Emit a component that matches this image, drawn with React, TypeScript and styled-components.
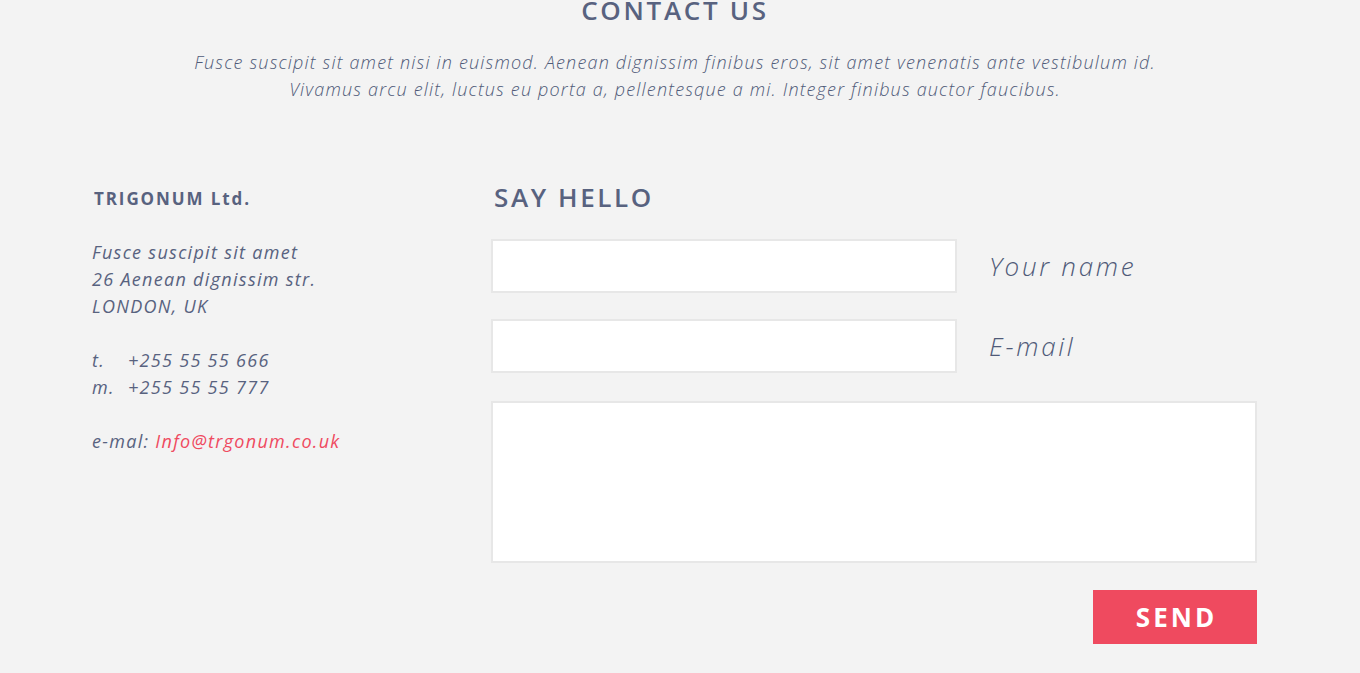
import React from "react";
import styled, { createGlobalStyle } from "styled-components";

const Global = createGlobalStyle`
  html, body { margin: 0; padding: 0; background: #f3f3f3; }
  body { font-family: "Open Sans", "Liberation Sans", sans-serif; color: #58627f; }
  * { box-sizing: border-box; }
`;

const Page = styled.div`
  width: 1166px;
  margin-left: 92px;
  padding-bottom: 40px;
`;

const Title = styled.h2`
  margin: 0;
  font-size: 26px;
  line-height: 20px;
  font-weight: 600;
  letter-spacing: 2.7px;
  text-align: center;
  color: #58627f;
`;

const Lead = styled.p`
  margin: 29px 0 0;
  font-size: 18px;
  line-height: 27px;
  font-style: italic;
  font-weight: 300;
  letter-spacing: 1.18px;
  text-align: center;
  color: #4f5a78;
`;

const Columns = styled.div`
  display: grid;
  grid-template-columns: 399px 766px;
  margin-top: 82px;
`;

const Company = styled.h3`
  margin: 2px 0 0 2px;
  font-size: 17px;
  line-height: 24px;
  font-weight: 700;
  letter-spacing: 1.9px;
  color: #58627f;
`;

const Info = styled.div`
  margin-top: 28px;
  font-size: 18px;
  line-height: 27px;
  font-style: italic;
  font-weight: 400;
  letter-spacing: 1.3px;
  color: #58627f;
`;

const Block = styled.div`
  margin-bottom: 27px;
`;

const Phone = styled.div`
  display: flex;
`;

const PhoneKey = styled.span`
  width: 36px;
`;

const Mail = styled.a`
  color: #ef4a5f;
  text-decoration: none;
`;

const Form = styled.form`
  display: flex;
  flex-direction: column;
`;

const FormTitle = styled.h3`
  margin: -3px 0 0 3px;
  font-size: 26px;
  line-height: 30px;
  font-weight: 600;
  letter-spacing: 2.6px;
  color: #58627f;
`;

const Row = styled.label`
  display: flex;
  align-items: center;
  gap: 32px;
  margin-top: ${(p: { $top: number }) => p.$top}px;
`;

const Input = styled.input`
  width: 466px;
  height: 54px;
  border: 2px solid #e7e7e7;
  background: #fff;
  outline: none;
  font: inherit;
`;

const FieldLabel = styled.span`
  font-size: 26px;
  font-style: italic;
  font-weight: 300;
  letter-spacing: 2.7px;
  color: #4f5a78;
`;

const Message = styled.textarea`
  margin-top: 28px;
  width: 766px;
  height: 162px;
  border: 2px solid #e7e7e7;
  background: #fff;
  outline: none;
  resize: none;
  font: inherit;
`;

const Actions = styled.div`
  display: flex;
  justify-content: flex-end;
  margin-top: 27px;
`;

const Send = styled.button`
  width: 164px;
  height: 54px;
  border: none;
  background: #ef4a5f;
  color: #fff;
  font-family: "Open Sans", "Liberation Sans", sans-serif;
  font-size: 26px;
  font-weight: 700;
  letter-spacing: 3px;
  padding: 0 0 0 3px;
  cursor: pointer;
`;

export default function App() {
  return (
    <>
      <Global />
      <Page>
        <Title>CONTACT US</Title>
        <Lead>
          Fusce suscipit sit amet nisi in euismod. Aenean dignissim finibus eros, sit amet venenatis ante vestibulum id.
          <br />
          Vivamus arcu elit, luctus eu porta a, pellentesque a mi. Integer finibus auctor faucibus.
        </Lead>
        <Columns>
          <div>
            <Company>TRIGONUM Ltd.</Company>
            <Info>
              <Block>
                Fusce suscipit sit amet
                <br />
                26 Aenean dignissim str.
                <br />
                LONDON, UK
              </Block>
              <Block>
                <Phone>
                  <PhoneKey>t.</PhoneKey>
                  <span>+255 55 55 666</span>
                </Phone>
                <Phone>
                  <PhoneKey>m.</PhoneKey>
                  <span>+255 55 55 777</span>
                </Phone>
              </Block>
              <Block>
                e-mal: <Mail href="#">Info@trgonum.co.uk</Mail>
              </Block>
            </Info>
          </div>
          <Form onSubmit={(e) => e.preventDefault()}>
            <FormTitle>SAY HELLO</FormTitle>
            <Row $top={27}>
              <Input type="text" />
              <FieldLabel>Your name</FieldLabel>
            </Row>
            <Row $top={26}>
              <Input type="email" />
              <FieldLabel>E-mail</FieldLabel>
            </Row>
            <Message />
            <Actions>
              <Send type="submit">SEND</Send>
            </Actions>
          </Form>
        </Columns>
      </Page>
    </>
  );
}
